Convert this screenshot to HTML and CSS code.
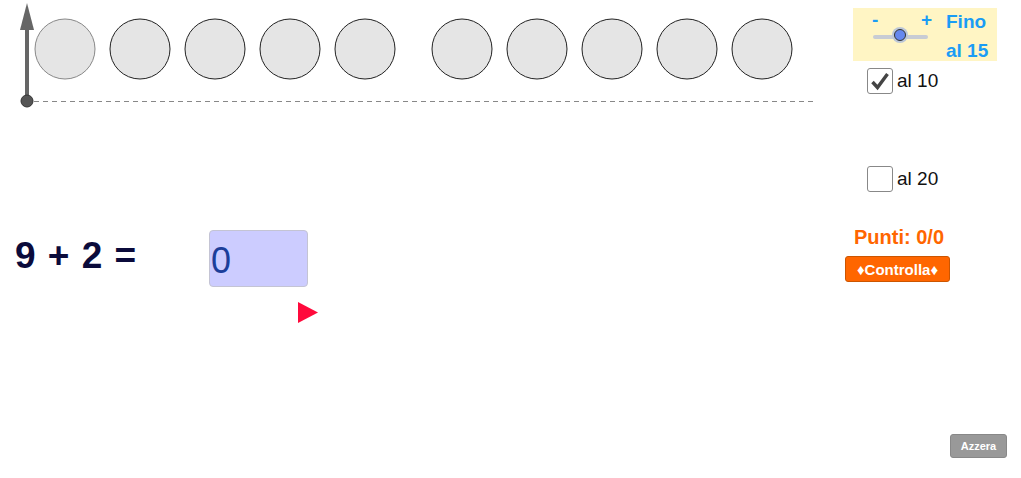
FILE: index.html
```html
<!DOCTYPE html>
<html lang="it">
<head>
<meta charset="utf-8">
<title>Addizioni</title>
<link rel="stylesheet" href="styles.css">
</head>
<body>
<div class="applet">
  <svg class="drawing" width="820" height="110" viewBox="0 0 820 110">
    <line x1="34" y1="101.5" x2="815" y2="101.5" stroke="#888" stroke-width="1" stroke-dasharray="5,4"/>
    <line x1="27" y1="101" x2="27" y2="26" stroke="#666" stroke-width="4"/>
    <polygon points="27,3 20,30 34,30" fill="#666"/>
    <circle cx="27" cy="101" r="6" fill="#555" stroke="#333" stroke-width="1"/>
    <circle cx="65" cy="49" r="30" fill="#e5e5e5" stroke="#888" stroke-width="1"/>
    <g fill="#e5e5e5" stroke="#222" stroke-width="1">
      <circle cx="140" cy="49" r="30"/>
      <circle cx="215" cy="49" r="30"/>
      <circle cx="290" cy="49" r="30"/>
      <circle cx="365" cy="49" r="30"/>
      <circle cx="462" cy="49" r="30"/>
      <circle cx="537" cy="49" r="30"/>
      <circle cx="612" cy="49" r="30"/>
      <circle cx="687" cy="49" r="30"/>
      <circle cx="762" cy="49" r="30"/>
    </g>
  </svg>

  <div class="slider-panel">
    <div class="slider-side">
      <div class="slider-signs"><span>-</span><span>+</span></div>
      <div class="slider-track"><span class="slider-knob"></span></div>
    </div>
    <div class="slider-label">Fino<br>al 15</div>
  </div>

  <label class="check check-10"><span class="box checked"><svg width="20" height="20" viewBox="0 0 20 20"><path d="M2.5 11 L7.5 16.5 L17.5 3" fill="none" stroke="#444" stroke-width="3.4" stroke-linejoin="miter"/></svg></span>al 10</label>
  <label class="check check-20"><span class="box"></span>al 20</label>

  <div class="equation">9 + 2 =</div>
  <div class="answer">0</div>
  <svg class="play" width="22" height="22" viewBox="0 0 22 22"><polygon points="0,0 20,10.5 0,21" fill="#ff0a3c"/></svg>

  <div class="score">Punti: 0/0</div>
  <button class="btn-check">♦Controlla♦</button>
  <button class="btn-reset">Azzera</button>
</div>
</body>
</html>
```
FILE: styles.css
```css
html, body {
  margin: 0;
  padding: 0;
  background: #fff;
}
body {
  font-family: "Liberation Sans", Arial, sans-serif;
}
.applet {
  position: relative;
  width: 1021px;
  height: 478px;
  overflow: hidden;
}
.drawing {
  position: absolute;
  left: 0;
  top: 0;
}
.slider-panel {
  position: absolute;
  left: 853px;
  top: 8px;
  width: 144px;
  height: 53px;
  background: #fff5c4;
  display: flex;
  color: #1a9cf5;
  font-weight: bold;
  font-size: 19px;
}
.slider-side {
  width: 93px;
  display: flex;
  flex-direction: column;
}
.slider-signs {
  display: flex;
  justify-content: space-between;
  padding: 2px 14px 0 19px;
  line-height: 20px;
}
.slider-track {
  position: relative;
  margin: 5px 0 0 20px;
  width: 55px;
  height: 4px;
  border-radius: 2px;
  background: #c8ccd4;
}
.slider-knob {
  position: absolute;
  left: 21px;
  top: -6px;
  width: 10px;
  height: 10px;
  border-radius: 50%;
  background: #6688ee;
  border: 1px solid #333;
  box-shadow: 0 0 0 2px #bcc7d8;
}
.slider-label {
  font-size: 19px;
  line-height: 29px;
  margin-top: -1px;
}
.check {
  position: absolute;
  left: 867px;
  display: flex;
  align-items: center;
  font-size: 19px;
  color: #111;
  gap: 4px;
}
.check-10 { top: 68px; }
.check-20 { top: 166px; }
.box {
  width: 24px;
  height: 24px;
  border: 1px solid #888;
  border-radius: 3px;
  background: #fff;
  display: flex;
  align-items: center;
  justify-content: center;
}
.equation {
  position: absolute;
  left: 15px;
  top: 235px;
  font-size: 37px;
  font-weight: bold;
  word-spacing: 2px;
  color: #0b0b3b;
}
.answer {
  position: absolute;
  left: 209px;
  top: 230px;
  width: 96px;
  height: 55px;
  background: #ccccff;
  border: 1px solid #c4c4d4;
  border-radius: 4px;
  color: #1c3e9a;
  font-size: 36px;
  line-height: 59px;
  padding-left: 1px;
}
.play {
  position: absolute;
  left: 298px;
  top: 302px;
}
.score {
  position: absolute;
  left: 854px;
  top: 226px;
  font-size: 20px;
  font-weight: bold;
  color: #ff6600;
}
.btn-check {
  position: absolute;
  left: 845px;
  top: 256px;
  width: 105px;
  height: 26px;
  padding: 0;
  background: #ff6600;
  border: 1px solid #cc5500;
  border-radius: 3px;
  color: #fff;
  font-family: "Liberation Sans", Arial, sans-serif;
  font-weight: bold;
  font-size: 15px;
}
.btn-reset {
  position: absolute;
  left: 950px;
  top: 434px;
  width: 57px;
  height: 24px;
  padding: 0;
  background: #999;
  border: 1px solid #888;
  border-radius: 3px;
  color: #fff;
  font-family: "Liberation Sans", Arial, sans-serif;
  font-weight: bold;
  font-size: 11px;
}
```
